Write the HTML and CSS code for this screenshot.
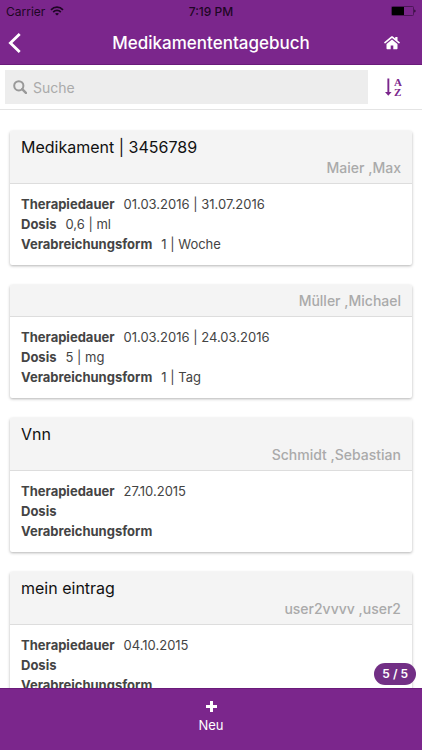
FILE: index.html
```html
<!DOCTYPE html>
<html lang="de">
<head>
    <meta charset="UTF-8">
    <meta name="viewport" content="width=device-width, initial-scale=1.0">
    <title>Medikamententagebuch</title>
    <link rel="stylesheet" href="styles.css">
</head>
<body>
    <header class="header">
        <div class="status-bar">
            <div class="carrier">
                <span>Carrier</span>
                <svg width="14" height="10" viewBox="0 0 14 10" fill="none" stroke="currentColor" stroke-width="1.7">
                    <path d="M1 3.8C4.4.3 9.6.3 13 3.8M3.2 6.1c2.2-2.2 5.4-2.2 7.6 0"/>
                    <path d="M7 9.6 5 7.7c1.2-1 2.8-1 4 0z" fill="currentColor" stroke="none"/>
                </svg>
            </div>
            <div class="time">7:19 PM</div>
            <div class="battery">
                <svg width="25" height="10" viewBox="0 0 25 10">
                    <rect x=".5" y=".5" width="22" height="9" rx="1" fill="none" stroke="#4d1659"/>
                    <rect x="1" y="1" width="12" height="8" fill="#000"/>
                    <path d="M23.5 3.5c1.2.4 1.2 2.6 0 3z" fill="#000"/>
                </svg>
            </div>
        </div>
        <div class="title-bar">
            <button class="icon-btn" aria-label="Zurück">
                <svg width="13" height="20" viewBox="0 0 13 20" fill="none" stroke="currentColor" stroke-width="2.8">
                    <path d="M11.7 1 2.4 10l9.300 9"/>
                </svg>
            </button>
            <h1>Medikamententagebuch</h1>
            <button class="icon-btn home-btn" aria-label="Startseite">
                <svg width="16" height="14" viewBox="0 0 16 14" fill="currentColor">
                    <path d="M8 3.4 2.5 8v4.6c0 .3.3.6.6.6h3.6V9.4h2.6v3.8h3.6c.3 0 .6-.3.6-.6V8z"/>
                    <path d="M15.8 6.3 13.5 4.400V1.200c0-.2-.1-.3-.3-.3h-1.700c-.2 0-.3.1-.3.3v1.300L8.900.600c-.5-.4-1.300-.4-1.800 0L.2 6.300c-.1.1-.2.300 0 .5l.6.7c.1.100.3.100.4 0L8 1.900 14.800 7.500c.1.100.3.100.4 0l.6-.7c.2-.2.1-.4 0-.5z"/>
                </svg>
            </button>
        </div>
    </header>

    <div class="search-bar">
        <label class="search-field">
            <svg width="14" height="14" viewBox="0 0 14 14" fill="none" stroke="currentColor" stroke-width="2">
                <circle cx="5.800" cy="5.800" r="4.600"/>
                <path d="m9.200 9.200 3.700 3.700" stroke-width="2.400" stroke-linecap="round"/>
            </svg>
            <input type="search" placeholder="Suche" aria-label="Suche">
        </label>
        <button class="sort-btn" aria-label="Sortieren">
            <svg width="17" height="20" viewBox="0 0 17 20" fill="currentColor">
                <path d="M2.400 1.500h1.900v13.500h2.300L3.300 18.800 0 15h2.400z"/>
                <text x="9" y="9">A</text>
                <text x="9" y="19">Z</text>
            </svg>
        </button>
    </div>

    <main class="list">
        <article class="card">
            <div class="card-header">
                <h2>Medikament | 3456789</h2>
                <p class="patient">Maier ,Max</p>
            </div>
            <dl class="card-body">
                <div><dt>Therapiedauer</dt><dd>01.03.2016 | 31.07.2016</dd></div>
                <div><dt>Dosis</dt><dd>0,6 | ml</dd></div>
                <div><dt>Verabreichungsform</dt><dd>1 | Woche</dd></div>
            </dl>
        </article>
        <article class="card">
            <div class="card-header">
                <p class="patient">Müller ,Michael</p>
            </div>
            <dl class="card-body">
                <div><dt>Therapiedauer</dt><dd>01.03.2016 | 24.03.2016</dd></div>
                <div><dt>Dosis</dt><dd>5 | mg</dd></div>
                <div><dt>Verabreichungsform</dt><dd>1 | Tag</dd></div>
            </dl>
        </article>
        <article class="card">
            <div class="card-header">
                <h2>Vnn</h2>
                <p class="patient">Schmidt ,Sebastian</p>
            </div>
            <dl class="card-body">
                <div><dt>Therapiedauer</dt><dd>27.10.2015</dd></div>
                <div><dt>Dosis</dt><dd></dd></div>
                <div><dt>Verabreichungsform</dt><dd></dd></div>
            </dl>
        </article>
        <article class="card">
            <div class="card-header">
                <h2>mein eintrag</h2>
                <p class="patient">user2vvvv ,user2</p>
            </div>
            <dl class="card-body">
                <div><dt>Therapiedauer</dt><dd>04.10.2015</dd></div>
                <div><dt>Dosis</dt><dd></dd></div>
                <div><dt>Verabreichungsform</dt><dd></dd></div>
            </dl>
        </article>
    </main>

    <footer class="footer">
        <span class="counter">5 / 5</span>
        <button class="new-btn">
            <svg width="11" height="11" viewBox="0 0 11 11" fill="none" stroke="currentColor" stroke-width="3">
                <path d="M5.500 0v11M0 5.500h11"/>
            </svg>
            <span>Neu</span>
        </button>
    </footer>
</body>
</html>
```

FILE: styles.css
```css
* {
    box-sizing: border-box;
}
body {
    display: flex;
    flex-direction: column;
    height: 100vh;
    margin: 0;
    font-family: Inter, 'Liberation Sans', sans-serif;
    font-size: 13px;
    color: #444;
    background-color: #fff;
}
h1, h2, p, dl, dd {
    margin: 0;
}
button {
    padding: 0;
    border: none;
    background: none;
    color: inherit;
    font-family: inherit;
    cursor: pointer;
}
svg {
    display: block;
}

/* Header */
.header {
    flex: none;
    background-color: #7b268c;
    border-bottom: 1px solid #6a1b7a;
    color: #fff;
}
.status-bar {
    display: grid;
    grid-template-columns: 1fr auto 1fr;
    align-items: center;
    height: 22px;
    padding: 0 6px;
    font-size: 12px;
    color: #1e0624;
}
.carrier {
    display: flex;
    align-items: center;
    gap: 5px;
}
.time {
    font-weight: 500;
}
.battery {
    justify-self: end;
}
.title-bar {
    display: grid;
    grid-template-columns: 32px 1fr 32px;
    align-items: center;
    height: 42px;
    padding: 0 6px;
}
.icon-btn {
    display: flex;
    align-items: center;
    height: 40px;
    padding-left: 2px;
}
.home-btn {
    padding-left: 0;
}
h1 {
    font-size: 17px;
    font-weight: 500;
    text-align: center;
}

/* Search */
.search-bar {
    flex: none;
    display: flex;
    align-items: center;
    height: 45px;
    padding-left: 5px;
    border-bottom: 1px solid #e4e4e4;
}
.search-field {
    flex: 1;
    display: flex;
    align-items: center;
    gap: 6px;
    height: 34px;
    padding: 0 8px;
    background-color: #ededed;
    color: #999;
}
.search-field input {
    flex: 1;
    min-width: 0;
    padding: 0;
    border: none;
    outline: none;
    background: none;
    font-family: inherit;
    font-size: 14px;
    color: #444;
}
.search-field input::placeholder {
    color: #aaa;
}
.sort-btn {
    display: flex;
    justify-content: center;
    width: 54px;
    padding-right: 4px;
    color: #7b268c;
}
.sort-btn text {
    font-family: 'Liberation Serif', serif;
    font-size: 11px;
    font-weight: bold;
}

/* Cards */
.list {
    flex: 1;
    min-height: 0;
    overflow-y: auto;
    scrollbar-width: none;
    padding: 21px 10px;
}
.card {
    margin-bottom: 20px;
    border-radius: 2px;
    background-color: #fff;
    box-shadow: 0 1px 3px rgba(0, 0, 0, 0.3);
}
.card-header {
    padding: 6px 11px 5px;
    border-bottom: 1px solid #ddd;
    border-radius: 2px 2px 0 0;
    background-color: #f4f4f4;
}
.card-header h2 {
    font-size: 16px;
    font-weight: 400;
    line-height: 21px;
    color: #111;
}
.patient {
    font-size: 14px;
    font-weight: 500;
    line-height: 20px;
    text-align: right;
    color: #aaa;
}
.card-body {
    padding: 10px 11px 11px;
}
.card-body div {
    display: flex;
    gap: 9px;
    line-height: 20px;
}
dt {
    font-weight: 700;
}

/* Footer */
.footer {
    flex: none;
    position: relative;
    height: 62px;
    background-color: #7b268c;
    border-top: 1px solid #6a1b7a;
    color: #fff;
}
.new-btn {
    display: flex;
    flex-direction: column;
    align-items: center;
    gap: 5px;
    width: 100%;
    padding-top: 12px;
    font-size: 13px;
    line-height: 16px;
}
.counter {
    position: absolute;
    right: 6px;
    bottom: 65px;
    padding: 0 8px;
    border-radius: 11px;
    background-color: #722f85;
    font-size: 12px;
    font-weight: 600;
    line-height: 22px;
}
```
